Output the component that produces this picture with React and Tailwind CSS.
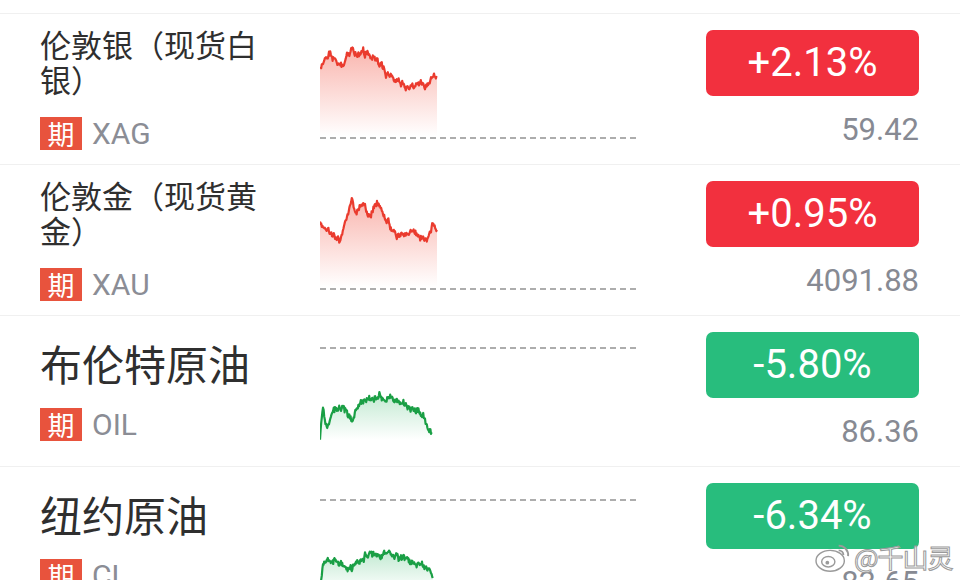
import React from 'react';

const rand = (seed) => {
  let s = seed;
  return () => {
    s |= 0; s = (s + 0x6d2b79f5) | 0;
    let t = Math.imul(s ^ (s >>> 15), 1 | s);
    t = (t + Math.imul(t ^ (t >>> 7), 61 | t)) ^ t;
    return ((t ^ (t >>> 14)) >>> 0) / 4294967296;
  };
};

// interpolate between key points and add jitter
const buildLine = (keys, seed, amp = 5) => {
  const r = rand(seed);
  const pts = [];
  const end = keys[keys.length - 1][0];
  let walk = 0;
  for (let x = keys[0][0]; x <= end; x += 0.6) {
    let i = 0;
    while (i < keys.length - 2 && keys[i + 1][0] < x) i++;
    const [x0, y0] = keys[i];
    const [x1, y1] = keys[i + 1];
    const t = Math.min(1, Math.max(0, (x - x0) / (x1 - x0)));
    walk = walk * 0.6 + (r() - 0.5) * amp;
    pts.push([x, y0 + (y1 - y0) * t + walk + (r() - 0.5) * amp * 0.7]);
  }
  return pts;
};

const rows = [
  {
    name: '伦敦银（现货白银）',
    small: true,
    code: 'XAG',
    pct: '+2.13%',
    price: '59.42',
    up: true,
    dash: 100,
    base: 98,
    keys: [[0, 30], [3, 25], [10, 15], [15, 22], [22, 30], [32, 9], [37, 18], [42, 13], [55, 22], [62, 28], [70, 40], [80, 45], [90, 50], [100, 46], [108, 50], [113, 40], [117, 38]],
    seed: 11,
  },
  {
    name: '伦敦金（现货黄金）',
    small: true,
    code: 'XAU',
    pct: '+0.95%',
    price: '4091.88',
    up: true,
    dash: 100,
    base: 98,
    keys: [[0, 36], [10, 41], [20, 53], [32, 8], [35, 28], [43, 14], [50, 28], [57, 13], [67, 31], [77, 48], [93, 44], [107, 51], [113, 36], [117, 41]],
    seed: 23,
  },
  {
    name: '布伦特原油',
    code: 'OIL',
    pct: '-5.80%',
    price: '86.36',
    up: false,
    dash: 8,
    base: 100,
    keys: [[0, 98], [3, 67], [7, 90], [13, 70], [23, 68], [32, 82], [43, 60], [60, 56], [80, 63], [93, 70], [103, 72], [108, 86], [112, 94]],
    seed: 37,
  },
  {
    name: '纽约原油',
    code: 'CL',
    pct: '-6.34%',
    price: '83.65',
    up: false,
    dash: 9,
    base: 100,
    keys: [[0, 95], [3, 72], [17, 70], [30, 78], [43, 66], [67, 62], [87, 70], [107, 75], [113, 88]],
    seed: 41,
  },
];

const Spark = ({ row, id }) => {
  const pts = buildLine(row.keys, row.seed);
  const color = row.up ? '#ea3b2e' : '#1a9f45';
  const line = pts.map((p, i) => `${i ? 'L' : 'M'}${p[0].toFixed(1)},${p[1].toFixed(1)}`).join(' ');
  const last = pts[pts.length - 1][0].toFixed(1);
  const area = `${line} L${last},${row.base} L0,${row.base} Z`;
  return (
    <svg width="320" height="104" viewBox="0 0 320 104" className="block">
      <defs>
        <linearGradient id={id} x1="0" y1="0" x2="0" y2="1">
          <stop offset="0" stopColor={row.up ? '#f25a4a' : '#2fb565'} stopOpacity={row.up ? 0.45 : 0.3} />
          <stop offset="1" stopColor={row.up ? '#f25a4a' : '#2fb565'} stopOpacity="0" />
        </linearGradient>
      </defs>
      <line x1="0" y1={row.dash} x2="318" y2={row.dash} stroke="#adadad" strokeWidth="2" strokeDasharray="6 4" />
      <path d={area} fill={`url(#${id})`} />
      <path d={line} fill="none" stroke={color} strokeWidth="2.2" strokeLinejoin="round" />
    </svg>
  );
};

const Row = ({ row, i }) => (
  <div className="flex h-[151px] border-b border-[#f0f0f0]">
    <div className="w-[320px] pl-[40px] pb-[3px] flex flex-col justify-center gap-[21px]">
      <div
        className={
          row.small
            ? 'w-[235px] text-[31px] leading-[35px] text-[#2f2f2f]'
            : 'text-[42px] leading-[48px] text-[#2f2f2f]'
        }
        style={{ fontFamily: '"Noto Sans CJK SC", sans-serif' }}
      >
        {row.name}
      </div>
      <div className="flex items-center gap-[10px]">
        <span className="w-[42px] h-[33px] bg-[#e8533d] text-white text-[27px] leading-[33px] text-center font-['Noto_Sans_CJK_SC',sans-serif]">
          期
        </span>
        <span className="text-[30px] leading-[33px] text-[#8b8d95] font-['Roboto',sans-serif]">{row.code}</span>
      </div>
    </div>
    <div className="pt-[24px]">
      <Spark row={row} id={`g${i}`} />
    </div>
    <div className="flex-1 flex flex-col items-end pr-[41px] pt-[16px]">
      <div
        className={`w-[213px] h-[66px] rounded-[7px] flex items-center justify-center text-white text-[40px] font-['Roboto',sans-serif] ${
          row.up ? 'bg-[#f2303e]' : 'bg-[#28bd7d]'
        }`}
      >
        {row.pct}
      </div>
      <div className="mt-[17px] text-[31px] leading-[34px] text-[#878a93] font-['Roboto',sans-serif]">{row.price}</div>
    </div>
  </div>
);

export default function App() {
  return (
    <div className="relative w-[960px] h-[580px] overflow-hidden bg-white">
      <div className="h-[14px] border-b border-[#f0f0f0]" />
      {rows.map((row, i) => (
        <Row key={row.code} row={row} i={i} />
      ))}
      {/* watermark */}
      <div className="absolute left-[814px] top-[540px] flex items-center gap-[2px] whitespace-nowrap">
        <svg width="38" height="34" viewBox="0 0 40 36">
          <ellipse cx="17" cy="22" rx="15" ry="11" fill="white" fillOpacity="0.85" stroke="#9a9a9a" strokeWidth="1.5" />
          <ellipse cx="15" cy="23" rx="7" ry="5.5" fill="none" stroke="#9a9a9a" strokeWidth="1.5" />
          <circle cx="14" cy="24" r="2" fill="#9a9a9a" />
          <path d="M26 6 A10 10 0 0 1 36 17" fill="none" stroke="#9a9a9a" strokeWidth="2" />
          <path d="M26 11 A5 5 0 0 1 31 16" fill="none" stroke="#9a9a9a" strokeWidth="2" />
        </svg>
        <span className="text-[26px] leading-[32px] tracking-[-1px] text-white/80 [-webkit-text-stroke:1px_#9a9a9a] font-['Noto_Sans_CJK_SC',sans-serif]">
          @千山灵
        </span>
      </div>
    </div>
  );
}
